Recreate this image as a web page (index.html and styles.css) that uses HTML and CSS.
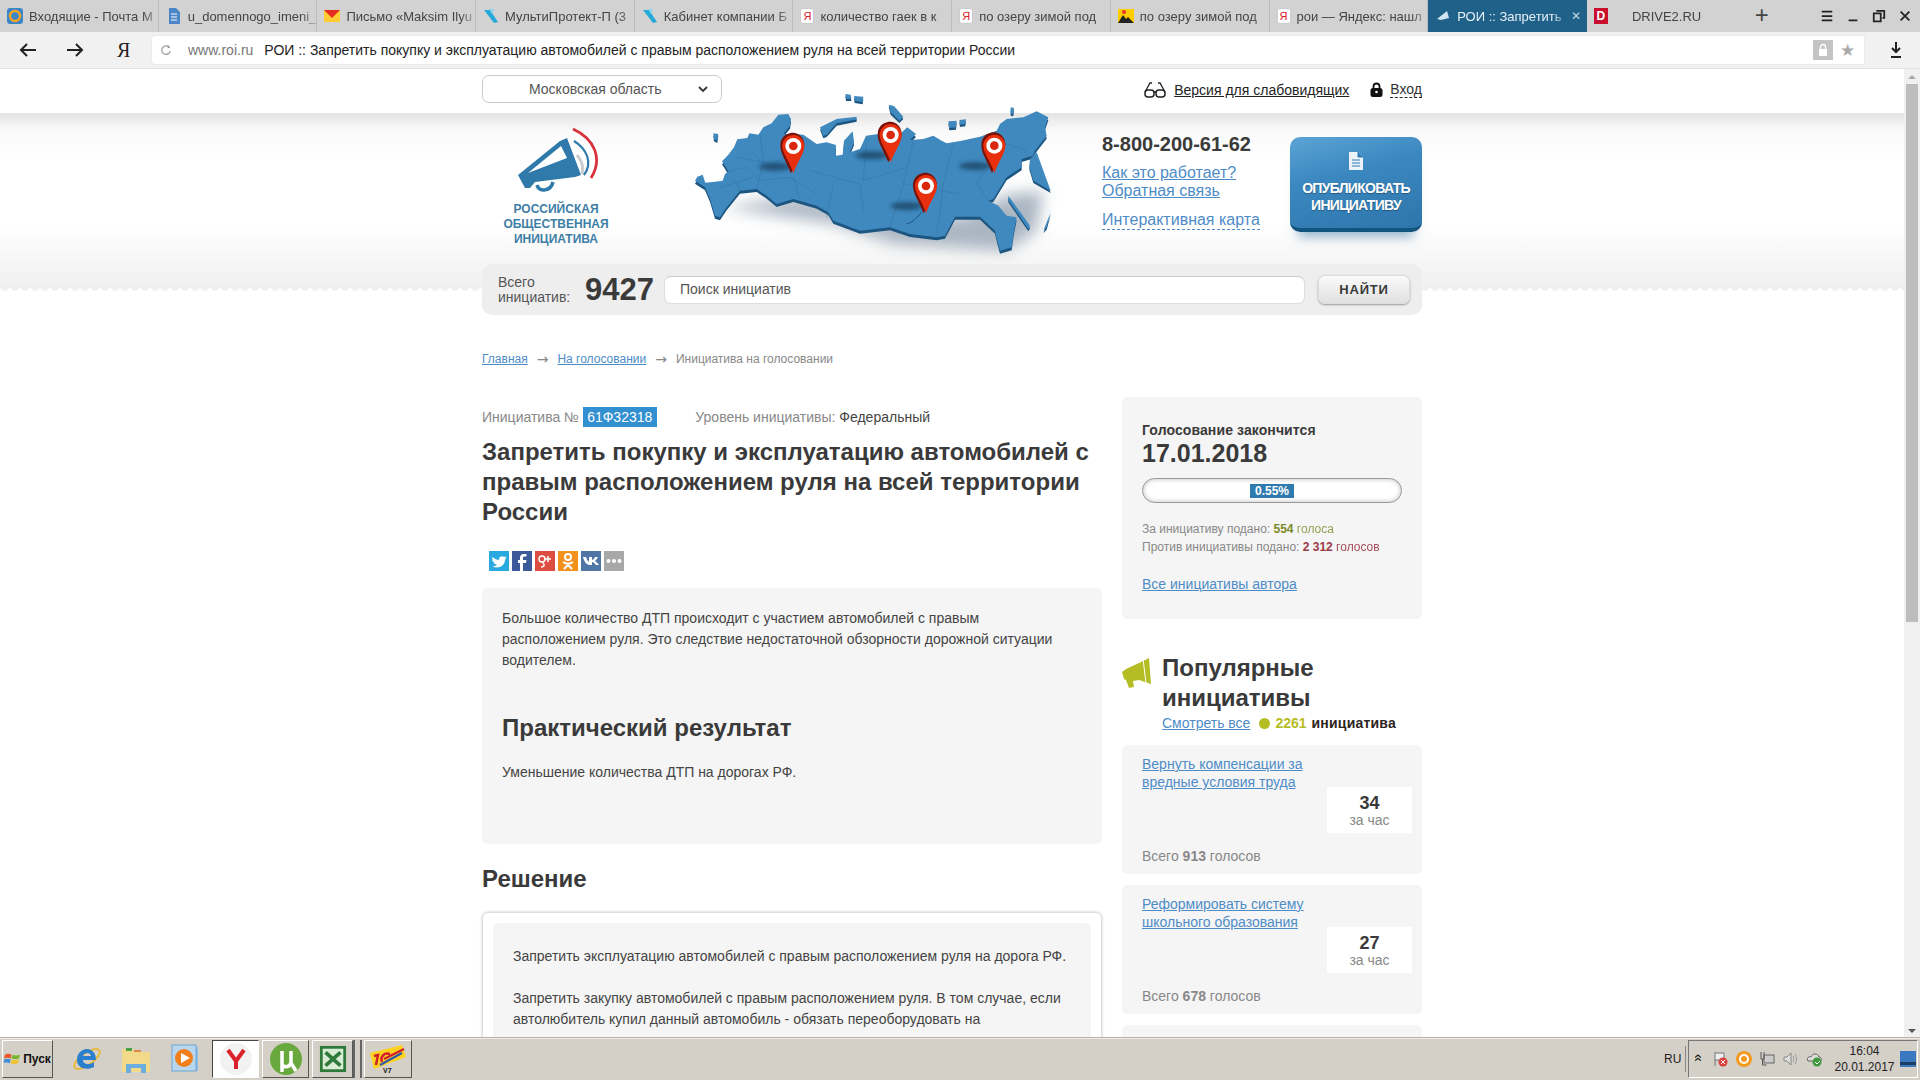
FILE: index.html
```html
<!DOCTYPE html>
<html lang="ru">
<head>
<meta charset="utf-8">
<title>РОИ :: Запретить покупку</title>
<link rel="stylesheet" href="styles.css">
</head>
<body>
<div class="tabs">
  <div class="tab"><svg class="fav" viewBox="0 0 16 16"><rect width="16" height="16" rx="3" fill="#3d86c6"/><circle cx="8" cy="8" r="5" fill="none" stroke="#f5a623" stroke-width="2.4"/></svg><span class="tab-t">Входящие - Почта М</span></div>
  <div class="tab"><svg class="fav" viewBox="0 0 16 16"><path d="M3 0h7l4 4v12H3z" fill="#4c86c6"/><path d="M5 6h6M5 9h6M5 12h6" stroke="#fff"/></svg><span class="tab-t">u_domennogo_imeni_</span></div>
  <div class="tab"><svg class="fav" viewBox="0 0 16 16"><rect y="2" width="16" height="12" fill="#fc3"/><path d="M0 2h16L8 10z" fill="#e52b1f"/></svg><span class="tab-t">Письмо «Maksim Ilyu</span></div>
  <div class="tab"><svg class="fav" viewBox="0 0 16 16"><path d="M1 2h6l8 12-4 1z" fill="#25a9d9"/><path d="M6 1h5l-2 5z" fill="#8ad6f0"/></svg><span class="tab-t">МультиПротект-П (3</span></div>
  <div class="tab"><svg class="fav" viewBox="0 0 16 16"><path d="M1 2h6l8 12-4 1z" fill="#25a9d9"/><path d="M6 1h5l-2 5z" fill="#8ad6f0"/></svg><span class="tab-t">Кабинет компании Б</span></div>
  <div class="tab"><span class="fav-y">Я</span><span class="tab-t">количество гаек в к</span></div>
  <div class="tab"><span class="fav-y">Я</span><span class="tab-t">по озеру зимой под</span></div>
  <div class="tab"><svg class="fav" viewBox="0 0 16 16"><rect y="1" width="16" height="14" fill="#fc0"/><path d="M0 15l5-8 3 4 2-2 6 6z" fill="#222"/><circle cx="6" cy="4" r="2" fill="#e33"/></svg><span class="tab-t">по озеру зимой под</span></div>
  <div class="tab"><span class="fav-y">Я</span><span class="tab-t">рои — Яндекс: нашл</span></div>
  <div class="tab tab-on"><svg class="fav" viewBox="0 0 16 16"><path d="M2 11L12 3l2 7-8 2z" fill="#cfe3f0"/></svg><span class="tab-t">РОИ :: Запретить</span><span class="tab-x">✕</span></div>
  <div class="tab tab-plain"><span class="fav-d">D</span><span class="tab-t tab-drive">DRIVE2.RU</span></div>
  <div class="tab-plus">+</div>
  <div class="win-ctl">
    <svg class="ctl" viewBox="0 0 16 16"><path d="M2 3h12M2 8h12M2 13h12" stroke="#222" stroke-width="2"/></svg>
    <svg class="ctl" viewBox="0 0 16 16"><path d="M3 13h10" stroke="#222" stroke-width="2"/></svg>
    <svg class="ctl" viewBox="0 0 16 16"><path d="M5 2h9v8h-2M2 5h8v9H2z" fill="none" stroke="#222" stroke-width="2"/></svg>
    <svg class="ctl" viewBox="0 0 16 16"><path d="M3 3l10 10M13 3L3 13" stroke="#222" stroke-width="2"/></svg>
  </div>
</div>

<div class="toolbar">
  <svg class="nav-ic" viewBox="0 0 18 14"><path d="M17 7H2M8 1L2 7l6 6" fill="none" stroke="#222" stroke-width="2"/></svg>
  <svg class="nav-ic" viewBox="0 0 18 14"><path d="M1 7h15M10 1l6 6-6 6" fill="none" stroke="#222" stroke-width="2"/></svg>
  <span class="ya">Я</span>
  <div class="omni">
    <svg class="reload" viewBox="0 0 14 14"><path d="M11 4a5 5 0 1 0 1 4" fill="none" stroke="#999" stroke-width="1.4"/><path d="M9 1l3 3-3 1z" fill="#999"/></svg>
    <span class="host">www.roi.ru</span><span class="page-t">РОИ :: Запретить покупку и эксплуатацию автомобилей с правым расположением руля на всей территории России</span>
    <span class="lock-box"><svg viewBox="0 0 10 14" width="10" height="14"><path d="M2.500 6V4a2.500 2.500 0 0 1 5 0v2" fill="none" stroke="#fff" stroke-width="1.300"/><rect x="1" y="6" width="8" height="7" fill="#fff"/></svg></span>
    <span class="star">★</span>
  </div>
  <svg class="dl" viewBox="0 0 14 18"><path d="M7 1v9M3 7l4 4 4-4" fill="none" stroke="#222" stroke-width="2"/><path d="M2 16h10" stroke="#222" stroke-width="2"/></svg>
</div>

<div class="viewport">
  <main class="page">
    <div class="wrap strip">
      <div class="region"><span>Московская область</span><svg class="chev" viewBox="0 0 10 7"><path d="M1 1l4 4 4-4" fill="none" stroke="#333" stroke-width="1.800"/></svg></div>
      <div class="access">
        <svg class="glasses" viewBox="0 0 22 17"><path d="M1 11L6 2h2M21 11L16 2h-2" fill="none" stroke="#222" stroke-width="1.300"/><rect x="1" y="9" width="9" height="7" rx="3" fill="none" stroke="#222" stroke-width="1.500"/><rect x="12" y="9" width="9" height="7" rx="3" fill="none" stroke="#222" stroke-width="1.500"/><path d="M10 11h2" stroke="#222" stroke-width="1.300"/></svg>
        <a class="access-l">Версия для слабовидящих</a>
        <svg class="lock" viewBox="0 0 13 15"><path d="M3.500 7V4.500a3 3 0 0 1 6 0V7" fill="none" stroke="#111" stroke-width="1.800"/><rect x="0.500" y="6" width="12" height="9" rx="2.500" fill="#111"/><circle cx="6.500" cy="10" r="1.300" fill="#fff"/></svg>
        <a class="login">Вход</a>
      </div>
    </div>

    <header class="head">
      <div class="wrap head-row">
        <div class="logo">
          <svg class="logo-ic" viewBox="0 0 85 70">
            <path d="M3 50L45 16L52 13L66 50L60 52L20 57L15 63L10 63Z" fill="#2f7aaa"/>
            <path d="M13 48L46 21L52 33Z" fill="#fff"/>
            <path d="M22 60C24 68 36 66 38 57" fill="none" stroke="#2f7aaa" stroke-width="3.500"/>
            <path d="M62 30C67 36 69 42 67 49" fill="none" stroke="#ccc" stroke-width="3"/>
            <path d="M59 16C72 24 78 38 69 50" fill="none" stroke="#2f7aaa" stroke-width="2.200"/>
            <path d="M58 4C80 14 88 34 76 53" fill="none" stroke="#d9323c" stroke-width="2.800"/>
          </svg>
          <div class="logo-t">РОССИЙСКАЯ<br>ОБЩЕСТВЕННАЯ<br>ИНИЦИАТИВА</div>
        </div>
        <svg class="map" viewBox="0 0 1260 540">
          <defs>
            <filter id="blur" x="-20%" y="-30%" width="140%" height="160%"><feGaussianBlur stdDeviation="22"/></filter>
            <filter id="blur2" x="-40%" y="-80%" width="180%" height="260%"><feGaussianBlur stdDeviation="7"/></filter>
            <path id="land" d="M105 290L112 278L128 272L136 296L165 293L188 290L195 270L205 262L186 232L205 212L222 190L232 166L262 162L268 148L295 152L310 130L335 118L355 92L385 90L393 105L390 125L370 150L398 150L430 152L470 180L500 175L528 183L527 215L548 212L552 170L578 142L582 175L570 205L600 195L618 155L655 150L700 165L720 150L742 130L768 150L750 168L790 165L820 155L845 170L860 178L905 170L960 158L1010 140L1020 120L1040 105L1090 100L1130 82L1165 100L1155 130L1160 155L1125 200L1118 215L1085 225L1085 250L1040 280L1000 345L985 350L1015 365L1040 395L1070 400L1062 440L1055 490L1020 500L1012 470L1005 440L960 398L885 398L855 455L830 460L750 450L690 430L600 440L520 410L505 385L470 365L400 345L350 360L320 335L290 315L240 320L200 370L180 400L165 395L150 345L135 310Z"/>
            <path id="isl" d="M480 130L530 105L590 98L590 106L530 118L500 152L490 156ZM1045 335L1110 425L1105 435L1045 348ZM1110 225L1130 205L1172 320L1120 290L1108 250ZM160 148L175 150L172 170L162 165ZM686 62L702 66L730 98L718 110L692 85ZM865 112L890 110L888 130L868 132ZM898 108L918 106L916 120L900 122ZM556 30L572 32L574 44L558 44ZM582 36L610 38L608 54L584 50ZM1052 70L1062 72L1060 90L1052 88ZM1150 440L1172 385L1160 430Z"/>
            <g id="pin"><path d="M-36 -2C-36 -34 -8 -40 2 -40C20 -40 36 -24 36 -4C36 16 12 50 -4 82L-28 30C-32 22 -36 10 -36 -2Z" fill="#7a1208"/><path d="M-30 0A33 33 0 0 1 36 0C36 22 16 46 3 82C-8 46 -30 22 -30 0Z" fill="#e8300f"/><circle cx="3" cy="0" r="24" fill="#fff"/><circle cx="3" cy="0" r="13" fill="#d9280f"/></g>
          </defs>
          <path d="M180 370L520 420L700 480L1040 500L1130 440L1150 320L1050 330L900 400L400 340Z" fill="#5a6f88" opacity=".5" filter="url(#blur)"/>
          <use href="#land" y="9" fill="#1c5580"/>
          <use href="#isl" y="7" fill="#1c5580"/>
          <use href="#land" fill="#4089bf"/>
          <use href="#isl" fill="#4089bf"/>
          <path d="M205 262L260 250L300 290L390 280L470 330M300 152L310 230L290 315M450 260L600 300L610 380M620 160L610 290M760 170L730 300L690 430M880 180L850 300L830 455M1000 200L950 300L985 350M230 220L340 240M180 310L280 280M520 300L500 400M730 300L900 330M610 290L740 250M1040 180L1100 200M260 190L300 230M220 280L240 320M340 240L400 200M400 280L420 345" fill="none" stroke="#2e6f9f" stroke-width="1.300"/>
          <path d="M740 420C760 415 770 400 785 385" fill="none" stroke="#1c5580" stroke-width="3"/>
          <ellipse cx="345" cy="248" rx="48" ry="12" fill="#143a58" opacity=".7" filter="url(#blur2)"/>
          <ellipse cx="635" cy="214" rx="48" ry="12" fill="#143a58" opacity=".7" filter="url(#blur2)"/>
          <ellipse cx="945" cy="246" rx="48" ry="12" fill="#143a58" opacity=".7" filter="url(#blur2)"/>
          <ellipse cx="740" cy="366" rx="48" ry="12" fill="#143a58" opacity=".7" filter="url(#blur2)"/>
          <use href="#pin" x="397" y="186"/>
          <use href="#pin" x="689" y="153"/>
          <use href="#pin" x="1000" y="185"/>
          <use href="#pin" x="795" y="306"/>
        </svg>
        <div class="contacts">
          <div class="phone">8-800-200-61-62</div>
          <a class="c-link">Как это работает?</a>
          <a class="c-link">Обратная связь</a>
          <a class="c-link c-map">Интерактивная карта</a>
        </div>
        <a class="publish">
          <svg class="doc" viewBox="0 0 16 20"><path d="M1 1h9l5 5v13H1z" fill="#eaf3fa"/><path d="M10 1v5h5" fill="#2f7ab5" stroke="#2f7ab5"/><path d="M4 9h8M4 12h8M4 15h8" stroke="#2f7ab5"/></svg>
          <span>ОПУБЛИКОВАТЬ<br>ИНИЦИАТИВУ</span>
        </a>
      </div>
      <div class="wrap search">
        <div class="total-l">Всего<br>инициатив:</div>
        <div class="total-n">9427</div>
        <div class="search-in">Поиск инициатив</div>
        <div class="search-b">НАЙТИ</div>
      </div>
      <div class="scallop"></div>
    </header>

    <div class="wrap crumbs">
      <a class="crumb">Главная</a><span class="arr">→</span><a class="crumb">На голосовании</a><span class="arr">→</span><span>Инициатива на голосовании</span>
    </div>

    <div class="wrap cols">
      <article class="main-col">
        <div class="meta">
          <span>Инициатива №</span><span class="badge">61Ф32318</span>
          <span class="level">Уровень инициативы: <b>Федеральный</b></span>
        </div>
        <h1 class="title">Запретить покупку и эксплуатацию автомобилей с правым расположением руля на всей территории России</h1>
        <div class="share">
          <svg class="soc s-tw" viewBox="0 0 20 20"><path d="M3 6c3 2 5 3 7 3-.5-3 3-5 5-3l2-1-1 2 2-.5-2 2c0 6-6 10-13 7 2 0 4-.5 5-2-2 0-3-1-3.500-2h1.500c-2-.5-3-2-3-3h1.500C3 8 3 7 3 6z" fill="#fff"/></svg>
          <svg class="soc s-fb" viewBox="0 0 20 20"><path d="M11 20v-8h3l.5-3H11V7c0-1 .5-1.500 1.500-1.500H14.500V3h-3C9 3 8 5 8 7v2H6v3h2v8z" fill="#fff"/></svg>
          <svg class="soc s-gp" viewBox="0 0 20 20"><circle cx="7" cy="8" r="3" fill="none" stroke="#fff" stroke-width="1.500"/><path d="M7 11c3 2 3 5-1 5M13 5v6M10 8h6" fill="none" stroke="#fff" stroke-width="1.500"/></svg>
          <svg class="soc s-ok" viewBox="0 0 20 20"><circle cx="10" cy="6" r="3" fill="none" stroke="#fff" stroke-width="2"/><path d="M5 11c3 2 7 2 10 0M10 13v1M6 18l4-4 4 4" fill="none" stroke="#fff" stroke-width="2"/></svg>
          <svg class="soc s-vk" viewBox="0 0 20 20"><path d="M2 6h3c1 3 2 4 3 5V6h3v3c1 0 2-1 3-3h3c-1 2-2 3-3 4 1 1 3 2 4 4h-3c-1-1-2-3-4-3v3h-2c-4 0-6-4-7-8z" fill="#fff"/></svg>
          <svg class="soc s-more" viewBox="0 0 20 20"><circle cx="4.500" cy="10" r="2" fill="#fff"/><circle cx="10" cy="10" r="2" fill="#fff"/><circle cx="15.500" cy="10" r="2" fill="#fff"/></svg>
        </div>
        <section class="card-desc">
          <p class="body-t">Большое количество ДТП происходит с участием автомобилей с правым расположением руля. Это следствие недостаточной обзорности дорожной ситуации водителем.</p>
          <h2 class="h2 h2-in">Практический результат</h2>
          <p class="body-t">Уменьшение количества ДТП на дорогах РФ.</p>
        </section>
        <h2 class="h2 h2-out">Решение</h2>
        <section class="card-sol">
          <div class="card-sol-in">
            <p class="body-t">Запретить эксплуатацию автомобилей с правым расположением руля на дорога РФ.</p>
            <p class="body-t sol-2">Запретить закупку автомобилей с правым расположением руля. В том случае, если автолюбитель купил данный автомобиль - обязать переоборудовать на</p>
          </div>
        </section>
      </article>

      <aside class="side">
        <section class="vote">
          <div class="vote-h">Голосование закончится</div>
          <div class="vote-d">17.01.2018</div>
          <div class="bar"><span class="bar-l">0.55%</span></div>
          <div class="tally">За инициативу подано: <b class="yes">554</b> <span class="yes-t">голоса</span><br>Против инициативы подано: <b class="no">2 312</b> <span class="no-t">голосов</span></div>
          <a class="link author">Все инициативы автора</a>
        </section>
        <div class="pop-h">
          <svg class="horn" viewBox="0 0 31 30"><path d="M0 14l4-3 15-7 8-4 2 26-12-4-6 1 1 6-5 1-3-8-2-1z" fill="#b5bd24"/><path d="M21 1l3 24" stroke="#fff" stroke-width="1"/></svg>
          <div>
            <div class="pop-t">Популярные инициативы</div>
            <div class="pop-sub"><a class="link">Смотреть все</a><i class="dot"></i><b class="cnt">2261</b> <b class="cnt-t">инициатива</b></div>
          </div>
        </div>
        <section class="item">
          <a class="link item-l">Вернуть компенсации за вредные условия труда</a>
          <div class="rate"><b>34</b><span>за час</span></div>
          <div class="item-v">Всего <b>913</b> голосов</div>
        </section>
        <section class="item">
          <a class="link item-l">Реформировать систему школьного образования</a>
          <div class="rate"><b>27</b><span>за час</span></div>
          <div class="item-v">Всего <b>678</b> голосов</div>
        </section>
        <section class="item"></section>
      </aside>
    </div>
  </main>
  <div class="scrollbar">
    <span class="sb-up"></span>
    <span class="sb-thumb"></span>
    <span class="sb-dn"></span>
  </div>
</div>

<footer class="taskbar">
  <div class="tb-btn start">
    <svg class="flag" viewBox="0 0 18 16"><path d="M1 3c3-2 5-1 7 0L7 7C5 6 3 6 0 7z" fill="#e8562a"/><path d="M9 3c3 1 5 1 8 0l-1 4c-3 1-5 1-8 0z" fill="#7ab52f"/><path d="M0 8c3-1 5-1 7 0l-1 4c-2-1-4-1-7 0z" fill="#3a8fd8"/><path d="M8 8c3 1 5 1 8 0l-1 4c-3 1-5 1-8 0z" fill="#f2c230"/></svg>
    <b>Пуск</b>
  </div>
  <div class="tb-ic">
    <svg viewBox="0 0 32 32" width="32" height="32"><ellipse cx="16" cy="16" rx="15" ry="6" transform="rotate(-35 16 16)" fill="none" stroke="#e8b93a" stroke-width="2"/><path d="M6 17c0-7 5-11 10-11s9 4 9 11H12c0 4 5 6 11 2v5c-8 4-17 1-17-7zm6-4h8c-.5-4-7-4-8 0z" fill="#2a7fcf"/></svg>
  </div>
  <div class="tb-ic tb-folder">
    <svg viewBox="0 0 32 32" width="32" height="32"><path d="M2 6h11l2 3h15v20H2z" fill="#f3d98a"/><rect x="6" y="5" width="6" height="3" fill="#4aa34a"/><rect x="14" y="7" width="7" height="2" fill="#d84"/><path d="M6 21h20v9h-5v-5H11v5H6z" fill="#6aaee0"/></svg>
  </div>
  <div class="tb-ic tb-media">
    <svg viewBox="0 0 32 32" width="32" height="32"><rect x="4" y="4" width="24" height="24" fill="#8cbde6"/><rect x="2" y="2" width="24" height="26" fill="#b8d6ee" stroke="#6fa6d2"/><circle cx="14" cy="15" r="9" fill="#f07f1c"/><path d="M11 10l9 5-9 5z" fill="#fff"/></svg>
  </div>
  <div class="tb-btn tb-app tb-yandex">
    <svg viewBox="0 0 34 34" width="34" height="34"><circle cx="17" cy="17" r="16" fill="#f2f2f2"/><path d="M9 8l8 11v8M25 8l-8 11" fill="none" stroke="#d9222a" stroke-width="4"/></svg>
  </div>
  <div class="tb-btn tb-app">
    <svg viewBox="0 0 34 34" width="34" height="34"><circle cx="17" cy="17" r="16" fill="#69a83c"/><path d="M13 9v12c0 5 7 5 9 0M22 9v12l5 8M13 20v10" fill="none" stroke="#fff" stroke-width="3.500"/></svg>
  </div>
  <div class="tb-btn tb-app tb-xl">
    <svg viewBox="0 0 30 30" width="28" height="28"><rect x="1" y="1" width="28" height="28" fill="#2f7a3a"/><rect x="4" y="4" width="22" height="22" fill="#d9ecd6"/><path d="M7 8l16 14M23 8L7 22" stroke="#2f7a3a" stroke-width="4"/></svg>
  </div>
  <div class="tb-sep"></div>
  <div class="tb-btn tb-app tb-1c">
    <svg viewBox="0 0 40 32" width="40" height="32"><path d="M2 10L34 2l4 12-32 12z" fill="#ffd21f"/><path d="M8 22l2-10-4 1M14 19c-2-5 2-10 8-8M16 16l20-10" fill="none" stroke="#d0202c" stroke-width="2.500"/><path d="M12 22L34 10" stroke="#2a55b0" stroke-width="2"/><text x="15" y="30" font-size="7" font-weight="bold" fill="#111">V7</text></svg>
  </div>
  <div class="tb-spacer"></div>
  <div class="lang">RU</div>
  <div class="tray">
    <span class="chevs">«</span>
    <svg class="tr" viewBox="0 0 16 16"><path d="M3 1v14M3 2h9v7H3" fill="#eee" stroke="#777"/><circle cx="11" cy="11" r="4.500" fill="#d9413e"/><path d="M9 9l4 4M13 9l-4 4" stroke="#fff"/></svg>
    <svg class="tr" viewBox="0 0 16 16"><circle cx="8" cy="8" r="8" fill="#f29a1f"/><circle cx="8" cy="8" r="4" fill="none" stroke="#fff" stroke-width="2"/></svg>
    <svg class="tr" viewBox="0 0 16 16"><rect x="5" y="4" width="10" height="8" fill="#ccc" stroke="#666"/><path d="M2 1v7h3V1M3.500 8v6h4" fill="none" stroke="#555"/></svg>
    <svg class="tr" viewBox="0 0 16 16"><path d="M1 6h3l4-4v12l-4-4H1z" fill="#ddd" stroke="#888"/><path d="M10 5c1 2 1 4 0 6M12 3c2 3 2 7 0 10" fill="none" stroke="#999"/></svg>
    <svg class="tr" viewBox="0 0 16 16"><path d="M2 10c-2-3 1-5 3-4 1-4 7-4 8 0 2 0 3 2 2 4z" fill="#ddd" stroke="#666"/><circle cx="11" cy="11" r="4.500" fill="#3f9a3f"/><path d="M9 11l2 2 3-3" fill="none" stroke="#fff"/></svg>
    <div class="clock">16:04<br>20.01.2017</div>
    <svg class="tr-desk" viewBox="0 0 16 16"><rect width="16" height="16" fill="#3a78c0"/><rect y="11" width="16" height="3" fill="#1d3f66"/></svg>
  </div>
</footer>
</body>
</html>
```

FILE: styles.css
```css
* { box-sizing: border-box; }
html, body { margin: 0; height: 100%; }
body {
  display: flex; flex-direction: column; height: 100vh; overflow: hidden;
  font-family: "Liberation Sans", Arial, sans-serif; font-size: 14px; color: #444; background: #fff;
}
a { cursor: pointer; }

/* browser chrome */
.tabs { display: flex; height: 32px; flex: none; background: #d2d2d2; align-items: stretch; }
.tab { width: 158.7px; flex: none; display: flex; align-items: center; gap: 6px; padding: 0 0 0 7px; border-right: 1px solid #bcbcbc; color: #444; font-size: 13px; overflow: hidden; }
.tab-t { flex: 1; white-space: nowrap; min-width: 0; -webkit-mask-image: linear-gradient(90deg, #000 88%, rgba(0,0,0,.25) 100%); mask-image: linear-gradient(90deg, #000 88%, rgba(0,0,0,.25) 100%); }
.tab-on { background: #1f6189; color: #e8f2f8; border-right: 0; }
.tab-on .tab-t { flex: none; width: 108px; }
.tab-x { color: #bcd4e2; font-size: 12px; }
.tab-plain { border-right: 0; width: 150px; }
.tab-drive { padding-left: 18px; }
.fav { width: 16px; height: 16px; flex: none; }
.fav-y { width: 14px; height: 16px; flex: none; background: #fff; border: 1px solid #ccc; border-radius: 3px; color: #d9222a; font-size: 11px; line-height: 14px; text-align: center; }
.fav-d { width: 14px; height: 16px; flex: none; background: #c8102e; color: #fff; font-size: 12px; font-weight: bold; line-height: 16px; text-align: center; }
.tab-plus { width: 30px; margin-left: 10px; text-align: center; font-size: 24px; line-height: 30px; color: #444; }
.win-ctl { margin-left: auto; display: flex; gap: 12px; align-items: center; padding-right: 8px; }
.ctl { width: 14px; height: 14px; }

.toolbar { height: 37px; flex: none; display: flex; align-items: center; background: #f1f1f1; border-bottom: 1px solid #e2e2e2; padding-left: 19px; }
.nav-ic { width: 18px; height: 14px; flex: none; margin-right: 29px; }
.ya { width: 18px; font-family: "Liberation Serif", serif; font-size: 20px; color: #222; margin-left: 4px; margin-right: 17px; }
.omni { width: 1712px; height: 28px; flex: none; background: #fff; border-radius: 3px 0 0 3px; display: flex; align-items: center; padding-left: 8px; box-shadow: 0 0 2px #ddd; white-space: nowrap; }
.reload { width: 12px; height: 12px; flex: none; margin-right: 16px; }
.host { color: #777; margin-right: 11px; }
.page-t { color: #222; }
.lock-box { margin-left: auto; width: 20px; height: 20px; background: #c4c4c4; display: flex; align-items: center; justify-content: center; }
.star { color: #aaa; font-size: 17px; margin: 0 9px 0 7px; }
.dl { width: 14px; height: 18px; margin-left: 25px; }

/* page */
.viewport { flex: 1; min-height: 0; display: flex; overflow: hidden; background: #fff; }
.page { flex: 1; min-width: 0; overflow: hidden; }
.wrap { width: 940px; margin-left: auto; margin-right: auto; }
.scrollbar { width: 16px; flex: none; background: #f0f0f0; display: flex; flex-direction: column; align-items: center; position: relative; padding-top: 15px; }
.sb-up { position: absolute; top: 6px; border: 4px solid transparent; border-top: 0; border-bottom: 4px solid #aaa; }
.sb-dn { position: absolute; bottom: 4px; border: 4px solid transparent; border-bottom: 0; border-top: 4px solid #555; }
.sb-thumb { width: 12px; height: 538px; background: #bdbdbd; }

.strip { height: 44px; display: flex; justify-content: space-between; align-items: flex-start; }
.region { width: 240px; height: 28px; margin-top: 6px; border: 1px solid #ccc; border-radius: 7px; display: flex; align-items: center; color: #555; padding-left: 46px; }
.chev { width: 10px; height: 7px; margin-left: 37px; margin-top: 1px; }
.access { display: flex; align-items: center; margin-top: 12px; color: #222; }
.glasses { width: 22px; height: 17px; margin-right: 8px; }
.access-l { text-decoration: underline; margin-right: 21px; }
.lock { width: 13px; height: 15px; margin-right: 7px; }
.login { border-bottom: 1px dashed #222; line-height: 16px; color: #333; }

.head { height: 175px; background: linear-gradient(#e4e4e4 0, #fafafa 18px, #fff 45px, #fff 110px, #f0f0f0 100%); position: relative; }
.head-row { height: 151px; display: flex; position: relative; }
.logo { width: 148px; flex: none; text-align: center; padding-top: 12px; }
.logo-ic { width: 85px; height: 70px; display: block; margin: 0 auto; transform: translateX(1px); }
.logo-t { font-size: 12px; font-weight: bold; line-height: 15px; color: #3d7ea6; margin-top: 7px; }
.map { width: 420px; height: 180px; flex: none; margin: -29px 0 0 30px; position: relative; }
.contacts { width: 188px; flex: none; margin-left: 22px; padding-top: 20px; display: flex; flex-direction: column; align-items: flex-start; }
.phone { font-size: 20px; font-weight: bold; color: #3a3a3a; line-height: 22px; margin-bottom: 9px; }
.c-link { font-size: 16px; line-height: 18px; color: #4e8cc7; text-decoration: underline; }
.c-map { text-decoration: none; border-bottom: 1px dashed #4e8cc7; line-height: 19px; margin-top: 10px; }
.publish { width: 132px; height: 95px; flex: none; margin-top: 24px; border-radius: 10px; border-bottom: 4px solid #14557f; background: linear-gradient(165deg, #5ba4d6 0, #3b87bf 40%, #2d76ac 100%); box-shadow: 0 13px 12px -8px rgba(60, 120, 160, .55); color: #fff; font-size: 14px; font-weight: bold; line-height: 17px; letter-spacing: -.7px; text-align: center; display: flex; flex-direction: column; align-items: center; padding-top: 14px; text-shadow: 0 1px 1px rgba(0, 0, 0, .3); }
.doc { width: 16px; height: 20px; margin-bottom: 9px; }
.search { height: 51px; background: #eee; border-radius: 10px; display: flex; align-items: center; padding: 0 12px 0 16px; position: relative; z-index: 1; }
.total-l { width: 87px; font-size: 14px; line-height: 15px; color: #555; flex: none; }
.total-n { width: 79px; font-size: 31px; font-weight: bold; color: #3a3a3a; flex: none; }
.search-in { flex: 1; height: 28px; background: #fff; border: 1px solid #ddd; border-top-color: #ccc; border-radius: 7px; padding-left: 15px; line-height: 25px; color: #555; }
.search-b { width: 92px; height: 29px; margin-left: 13px; flex: none; border: 1px solid #ddd; border-radius: 7px; background: linear-gradient(#fafafa, #e0e0e0); box-shadow: 0 1px 2px #999; text-align: center; line-height: 27px; font-weight: bold; font-size: 13px; letter-spacing: .8px; color: #3a3a3a; }
.scallop { position: absolute; left: 0; right: 0; bottom: -3px; height: 5px; background: radial-gradient(circle at 5px 0, #f0f0f0 4.500px, transparent 5px) 0 0 / 10px 5px repeat-x; }

.crumbs { margin-top: 63px; font-size: 12px; line-height: 16px; color: #888; display: flex; align-items: center; }
.crumb { color: #4e8cc7; text-decoration: underline; }
.arr { font-size: 14px; margin: 0 9px; color: #888; font-family: "DejaVu Sans", sans-serif; }

.cols { display: flex; gap: 20px; margin-top: 30px; align-items: flex-start; }
.main-col { width: 620px; flex: none; }
.side { width: 300px; flex: none; }

.meta { display: flex; align-items: center; height: 20px; margin-top: 10px; color: #888; }
.badge { background: #3390d0; color: #fff; height: 20px; line-height: 20px; padding: 0 5px 0 4px; margin-left: 4px; }
.level { margin-left: 38px; }
.level b { font-weight: normal; color: #444; }
.title { margin: 10px 0 0; font-size: 24px; line-height: 30px; font-weight: bold; color: #3a3a3a; }
.share { display: flex; gap: 3px; margin: 24px 0 0 7px; height: 20px; }
.soc { width: 20px; height: 20px; flex: none; }
.s-tw { background: #2aa9e0; }
.s-fb { background: #3c5a99; }
.s-gp { background: #dc4e41; }
.s-ok { background: #f2921d; }
.s-vk { background: #4f76a4; }
.s-more { background: #a8a8a8; }
.card-desc { margin-top: 17px; height: 256px; background: #f5f5f5; border-radius: 5px; padding: 20px 20px 0; }
.body-t { margin: 0; font-size: 14px; line-height: 21px; color: #444; }
.h2 { margin: 0; font-size: 24px; font-weight: bold; color: #3a3a3a; line-height: 30px; }
.h2-in { margin-top: 42px; margin-bottom: 19px; }
.h2-out { margin-top: 20px; }
.card-sol { margin-top: 18px; border: 1px solid #ddd; border-radius: 6px; box-shadow: 0 0 3px #ccc; padding: 10px; }
.card-sol-in { background: #f5f5f5; border-radius: 5px; padding: 23px 20px 60px; }
.sol-2 { margin-top: 21px; }

.vote { height: 222px; background: #f5f5f5; border-radius: 5px; padding: 25px 20px 0; }
.vote-h { font-size: 14px; font-weight: bold; line-height: 16px; color: #3a3a3a; letter-spacing: .1px; }
.vote-d { font-size: 25px; font-weight: bold; line-height: 30px; color: #3a3a3a; }
.bar { width: 260px; height: 25px; margin-top: 10px; border: 1px solid #999; border-radius: 13px; background: #fff; box-shadow: inset 0 0 5px #bbb; display: flex; align-items: center; justify-content: center; }
.bar-l { background: #2f7bb0; color: #fff; font-size: 12px; font-weight: bold; line-height: 14px; width: 44px; text-align: center; }
.tally { margin-top: 17px; font-size: 12px; line-height: 18px; color: #888; }
.yes { color: #7e8a2a; }
.yes-t { color: #7e8a2a; opacity: .8; }
.no { color: #9a3a45; }
.no-t { color: #9a3a45; opacity: .9; }
.link { color: #4e8cc7; text-decoration: underline; }
.author { display: block; margin-top: 19px; font-size: 14px; line-height: 18px; }
.pop-h { display: flex; margin-top: 34px; height: 92px; }
.horn { width: 31px; height: 30px; flex: none; margin: 5px 9px 0 0; }
.pop-t { font-size: 24px; font-weight: bold; line-height: 30px; color: #3a3a3a; width: 200px; }
.pop-sub { display: flex; align-items: center; white-space: nowrap; font-size: 14px; line-height: 18px; margin-top: 1px; }
.dot { width: 11px; height: 11px; border-radius: 50%; background: #b5bd24; margin: 0 5px 0 9px; }
.cnt { color: #b5bd24; margin-right: 5px; }
.cnt-t { color: #2d2420; letter-spacing: .2px; }
.item { height: 129px; margin-bottom: 11px; background: #f5f5f5; border-radius: 5px; padding: 10px 10px 0 20px; position: relative; display: flex; flex-direction: column; }
.item-l { display: block; width: 170px; font-size: 14px; line-height: 18px; }
.rate { align-self: flex-end; width: 85px; height: 46px; margin-top: -4px; background: #fff; text-align: center; display: flex; flex-direction: column; padding-top: 6px; }
.rate b { font-size: 18px; line-height: 20px; color: #3a3a3a; }
.rate span { font-size: 14px; line-height: 14px; color: #888; }
.item-v { margin-top: 14px; font-size: 14px; line-height: 18px; color: #888; }

/* taskbar */
.taskbar { height: 43px; flex: none; background: #d4d0c8; border-top: 1px solid #b8b5ad; display: flex; align-items: center; padding: 0 2px; box-shadow: inset 0 1px 0 #eeebe4; }
.tb-btn { height: 38px; background: #d4d0c8; border: 1px solid; border-color: #fff #555 #555 #fff; display: flex; align-items: center; justify-content: center; flex: none; }
.start { width: 51px; gap: 2px; color: #111; font-size: 12px; }
.flag { width: 17px; height: 15px; }
.tb-ic { width: 32px; height: 32px; margin-left: 18px; flex: none; }
.tb-folder { margin-left: 17px; }
.tb-media { margin-left: 18px; }
.tb-app { width: 47px; margin-left: 3px; }
.tb-yandex { margin-left: 10px; background: #fff; border-color: #444 #fff #fff #444; }
.tb-xl { width: 41px; }
.tb-sep { width: 9px; height: 38px; border-left: 2px solid #666; border-right: 2px solid #666; flex: none; }
.tb-1c { width: 48px; margin-left: 2px; }
.tb-spacer { flex: 1; }
.lang { font-size: 12px; color: #222; width: 22px; border-right: 1px solid #888; height: 26px; line-height: 26px; margin-right: 2px; }
.tray { width: 230px; height: 38px; display: flex; align-items: center; border: 1px solid; border-color: #777 #fff #fff #777; padding-left: 5px; }
.chevs { font-size: 14px; transform: rotate(90deg); width: 10px; color: #111; line-height: 12px; margin-right: 8px; }
.tr { width: 16px; height: 16px; margin-right: 7.500px; flex: none; }
.clock { width: 62px; font-size: 12px; line-height: 16px; text-align: center; color: #222; margin-left: 4px; }
.tr-desk { width: 16px; height: 16px; margin-left: auto; margin-right: 1px; flex: none; }
```
